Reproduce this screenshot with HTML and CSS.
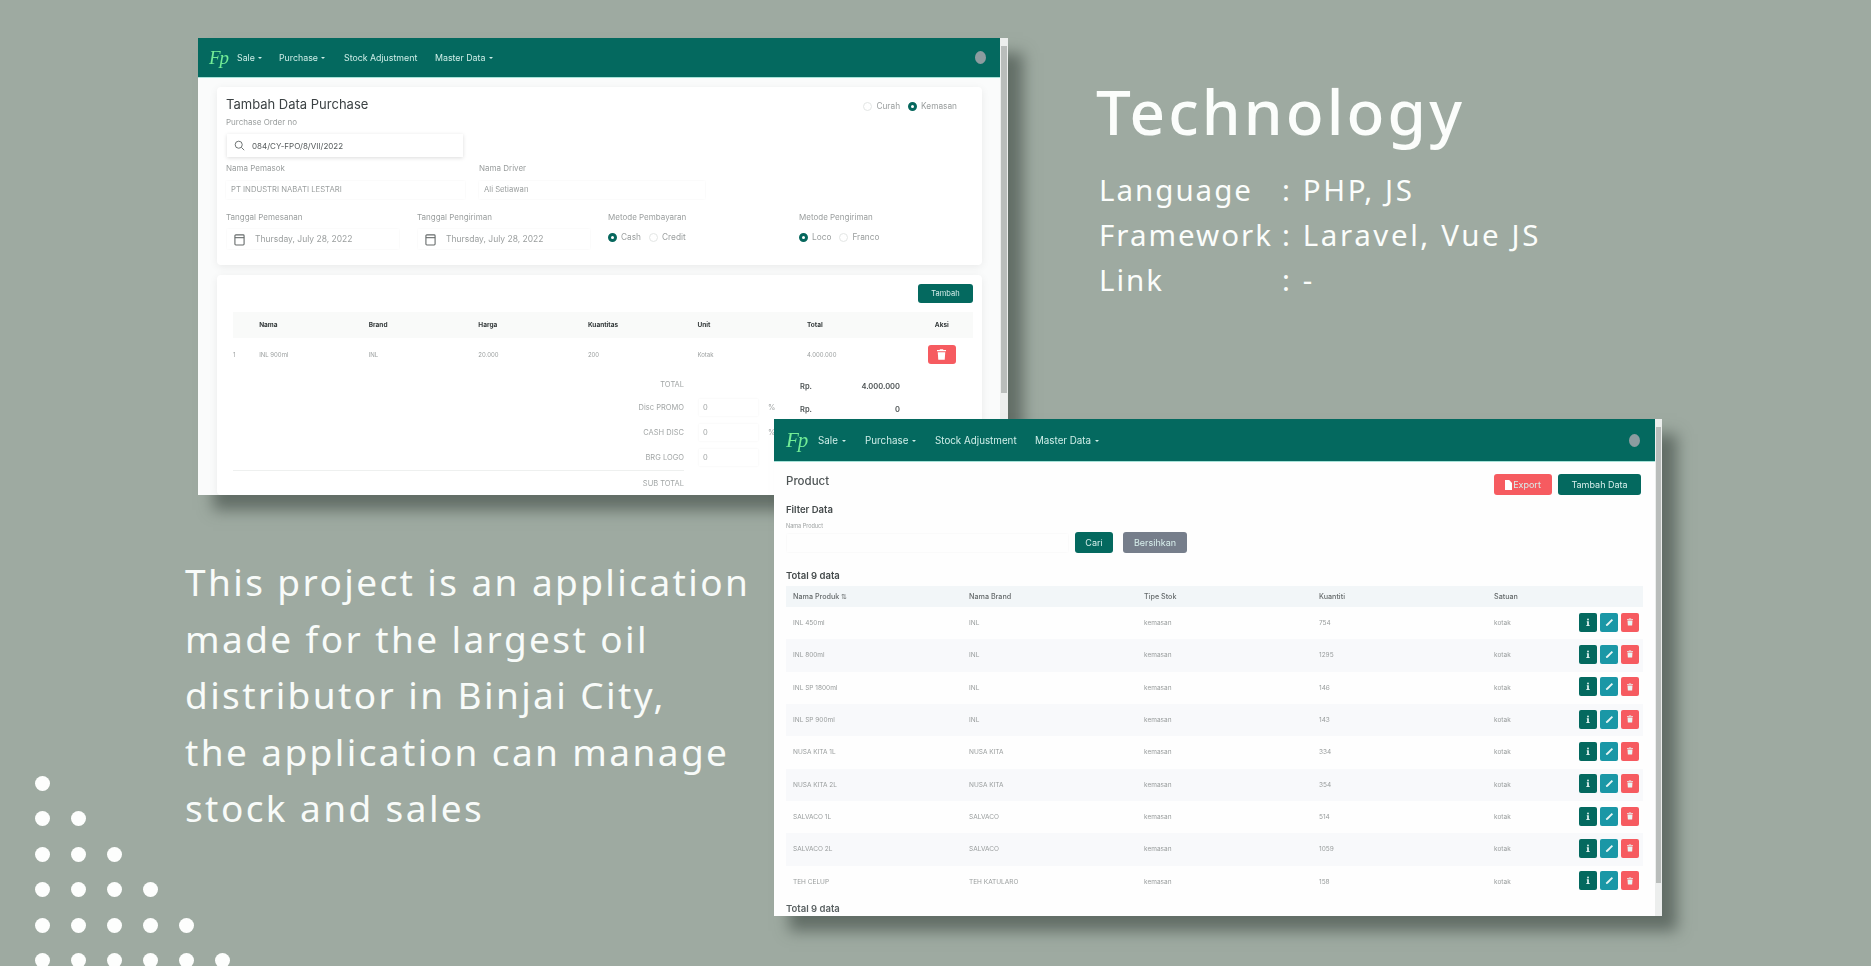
FILE: index.html
```html
<!DOCTYPE html>
<html lang="en">
<head>
  <meta charset="UTF-8">
  <title>Project - Technology</title>
  <link rel="stylesheet" href="styles.css">
</head>
<body>
  <svg class="icon-defs" width="0" height="0">
    <symbol id="i-info" viewBox="0 0 10 14"><circle cx="5" cy="2" r="1.5"/><path d="M3 5h3.4v6.4H8V13H2v-1.6h1.6V6.6H3z"/></symbol>
    <symbol id="i-pen" viewBox="0 0 14 14"><path d="M10.500 1.500l2 2-8.400 8.400L1.500 12.500l.6-2.600z"/></symbol>
    <symbol id="i-trash" viewBox="0 0 12 14"><path d="M4 0h4l.6 1H12v1.6H0V1h3.4zM1 4h10l-.7 10H1.700z"/></symbol>
    <symbol id="i-file" viewBox="0 0 10 14"><path d="M0 0h6l4 4v10H0z"/></symbol>
  </svg>

  <!-- jendela form purchase -->
  <section class="window window-form">
    <div class="screen">
      <nav class="nav">
        <span class="logo">Fp</span>
        <a class="nav-link nav-sale">Sale <i class="caret"></i></a>
        <a class="nav-link nav-purchase">Purchase <i class="caret"></i></a>
        <a class="nav-link nav-stock">Stock Adjustment</a>
        <a class="nav-link">Master Data <i class="caret"></i></a>
        <span class="avatar"></span>
      </nav>

      <div class="card card-form">
        <div class="form-head">
          <h2>Tambah Data Purchase</h2>
          <div class="radios">
            <span class="radio"></span><span>Curah</span>
            <span class="radio checked"></span><span>Kemasan</span>
          </div>
        </div>
        <label class="field-label">Purchase Order no</label>
        <div class="search-input">
          <svg viewBox="0 0 14 14" width="11" height="11" class="line-icon"><circle cx="6" cy="6" r="4.500"/><path d="M9.500 9.500L13 13"/></svg>
          <span>084/CY-FPO/8/VII/2022</span>
        </div>
        <div class="row-supplier">
          <div>
            <label class="field-label">Nama Pemasok</label>
            <div class="text-input">PT INDUSTRI NABATI LESTARI</div>
          </div>
          <div>
            <label class="field-label">Nama Driver</label>
            <div class="text-input">Ali Setiawan</div>
          </div>
        </div>
        <div class="row-dates">
          <div>
            <label class="field-label">Tanggal Pemesanan</label>
            <div class="date-input">
              <svg viewBox="0 0 12 14" width="11" height="13" class="line-icon"><rect x="1" y="2" width="10" height="11" rx="1"/><path d="M1 5h10"/></svg>
              <span>Thursday, July 28, 2022</span>
            </div>
          </div>
          <div>
            <label class="field-label">Tanggal Pengiriman</label>
            <div class="date-input">
              <svg viewBox="0 0 12 14" width="11" height="13" class="line-icon"><rect x="1" y="2" width="10" height="11" rx="1"/><path d="M1 5h10"/></svg>
              <span>Thursday, July 28, 2022</span>
            </div>
          </div>
          <div>
            <label class="field-label">Metode Pembayaran</label>
            <div class="radios radios-row">
              <span class="radio checked"></span><span>Cash</span>
              <span class="radio"></span><span>Credit</span>
            </div>
          </div>
          <div>
            <label class="field-label">Metode Pengiriman</label>
            <div class="radios radios-row">
              <span class="radio checked"></span><span>Loco</span>
              <span class="radio"></span><span>Franco</span>
            </div>
          </div>
        </div>
      </div>

      <div class="card card-items">
        <div class="items-top"><button class="btn btn-teal btn-add">Tambah</button></div>
        <table class="items-table">
          <thead>
            <tr><th></th><th>Nama</th><th>Brand</th><th>Harga</th><th>Kuantitas</th><th>Unit</th><th>Total</th><th class="col-aksi">Aksi</th></tr>
          </thead>
          <tbody>
            <tr>
              <td>1</td><td>INL 900ml</td><td>INL</td><td>20.000</td><td>200</td><td>Kotak</td><td>4.000.000</td>
              <td class="col-aksi"><button class="btn-del"><svg width="9" height="11"><use href="#i-trash"/></svg></button></td>
            </tr>
          </tbody>
        </table>
        <div class="totals">
          <span class="t-label">TOTAL</span><span></span><span></span><span class="t-rp">Rp.</span><span class="t-value">4.000.000</span>
          <span class="t-label">Disc PROMO</span><span class="t-field"><i>0</i></span><span class="t-pct">%</span><span class="t-rp">Rp.</span><span class="t-value">0</span>
          <span class="t-label">CASH DISC</span><span class="t-field"><i>0</i></span><span class="t-pct">%</span><span></span><span></span>
          <span class="t-label">BRG LOGO</span><span class="t-field"><i>0</i></span><span></span><span></span><span></span>
          <span class="t-label t-sub">SUB TOTAL</span><span></span><span></span><span></span><span></span>
        </div>
      </div>
    </div>
    <div class="scrollbar scrollbar-form"><span></span></div>
  </section>

  <!-- jendela list product -->
  <section class="window window-list">
    <div class="screen">
      <nav class="nav nav-large">
        <span class="logo">Fp</span>
        <a class="nav-link nav-sale">Sale <i class="caret"></i></a>
        <a class="nav-link nav-purchase">Purchase <i class="caret"></i></a>
        <a class="nav-link nav-stock">Stock Adjustment</a>
        <a class="nav-link">Master Data <i class="caret"></i></a>
        <span class="avatar"></span>
      </nav>

      <div class="list-body">
        <div class="list-head">
          <h2>Product</h2>
          <div class="list-actions">
            <button class="btn btn-red"><svg width="7" height="10"><use href="#i-file"/></svg>Export</button>
            <button class="btn btn-teal btn-data">Tambah Data</button>
          </div>
        </div>
        <h3 class="filter-title">Filter Data</h3>
        <label class="filter-label">Nama Product</label>
        <div class="filter-row">
          <div class="filter-input"></div>
          <button class="btn btn-teal btn-cari">Cari</button>
          <button class="btn btn-grey">Bersihkan</button>
        </div>
        <h3 class="total-title">Total 9 data</h3>
        <table class="product-table">
          <thead>
            <tr><th>Nama Produk ⇅</th><th>Nama Brand</th><th>Tipe Stok</th><th>Kuantiti</th><th>Satuan</th><th></th></tr>
          </thead>
          <tbody>
            <tr><td>INL 450ml</td><td>INL</td><td>kemasan</td><td>754</td><td>kotak</td><td><div class="actions"><button class="act act-info"><svg width="6" height="9"><use href="#i-info"/></svg></button><button class="act act-edit"><svg width="9" height="9"><use href="#i-pen"/></svg></button><button class="act act-del"><svg width="6" height="8"><use href="#i-trash"/></svg></button></div></td></tr>
            <tr><td>INL 800ml</td><td>INL</td><td>kemasan</td><td>1295</td><td>kotak</td><td><div class="actions"><button class="act act-info"><svg width="6" height="9"><use href="#i-info"/></svg></button><button class="act act-edit"><svg width="9" height="9"><use href="#i-pen"/></svg></button><button class="act act-del"><svg width="6" height="8"><use href="#i-trash"/></svg></button></div></td></tr>
            <tr><td>INL SP 1800ml</td><td>INL</td><td>kemasan</td><td>146</td><td>kotak</td><td><div class="actions"><button class="act act-info"><svg width="6" height="9"><use href="#i-info"/></svg></button><button class="act act-edit"><svg width="9" height="9"><use href="#i-pen"/></svg></button><button class="act act-del"><svg width="6" height="8"><use href="#i-trash"/></svg></button></div></td></tr>
            <tr><td>INL SP 900ml</td><td>INL</td><td>kemasan</td><td>143</td><td>kotak</td><td><div class="actions"><button class="act act-info"><svg width="6" height="9"><use href="#i-info"/></svg></button><button class="act act-edit"><svg width="9" height="9"><use href="#i-pen"/></svg></button><button class="act act-del"><svg width="6" height="8"><use href="#i-trash"/></svg></button></div></td></tr>
            <tr><td>NUSA KITA 1L</td><td>NUSA KITA</td><td>kemasan</td><td>334</td><td>kotak</td><td><div class="actions"><button class="act act-info"><svg width="6" height="9"><use href="#i-info"/></svg></button><button class="act act-edit"><svg width="9" height="9"><use href="#i-pen"/></svg></button><button class="act act-del"><svg width="6" height="8"><use href="#i-trash"/></svg></button></div></td></tr>
            <tr><td>NUSA KITA 2L</td><td>NUSA KITA</td><td>kemasan</td><td>354</td><td>kotak</td><td><div class="actions"><button class="act act-info"><svg width="6" height="9"><use href="#i-info"/></svg></button><button class="act act-edit"><svg width="9" height="9"><use href="#i-pen"/></svg></button><button class="act act-del"><svg width="6" height="8"><use href="#i-trash"/></svg></button></div></td></tr>
            <tr><td>SALVACO 1L</td><td>SALVACO</td><td>kemasan</td><td>514</td><td>kotak</td><td><div class="actions"><button class="act act-info"><svg width="6" height="9"><use href="#i-info"/></svg></button><button class="act act-edit"><svg width="9" height="9"><use href="#i-pen"/></svg></button><button class="act act-del"><svg width="6" height="8"><use href="#i-trash"/></svg></button></div></td></tr>
            <tr><td>SALVACO 2L</td><td>SALVACO</td><td>kemasan</td><td>1059</td><td>kotak</td><td><div class="actions"><button class="act act-info"><svg width="6" height="9"><use href="#i-info"/></svg></button><button class="act act-edit"><svg width="9" height="9"><use href="#i-pen"/></svg></button><button class="act act-del"><svg width="6" height="8"><use href="#i-trash"/></svg></button></div></td></tr>
            <tr><td>TEH CELUP</td><td>TEH KATULARO</td><td>kemasan</td><td>158</td><td>kotak</td><td><div class="actions"><button class="act act-info"><svg width="6" height="9"><use href="#i-info"/></svg></button><button class="act act-edit"><svg width="9" height="9"><use href="#i-pen"/></svg></button><button class="act act-del"><svg width="6" height="8"><use href="#i-trash"/></svg></button></div></td></tr>
          </tbody>
        </table>
        <h3 class="total-bottom">Total 9 data</h3>
      </div>
    </div>
    <div class="scrollbar scrollbar-list"><span></span></div>
  </section>

  <div class="tech">
    <h1>Technology</h1>
    <dl>
      <dt>Language</dt><dd>: PHP, JS</dd>
      <dt>Framework</dt><dd>: Laravel, Vue JS</dd>
      <dt>Link</dt><dd>: -</dd>
    </dl>
  </div>

  <p class="about">This project is an application<br>made for the largest oil<br>distributor in Binjai City,<br>the application can manage<br>stock and sales</p>

  <div class="dots">
    <div><i></i></div>
    <div><i></i><i></i></div>
    <div><i></i><i></i><i></i></div>
    <div><i></i><i></i><i></i><i></i></div>
    <div><i></i><i></i><i></i><i></i><i></i></div>
    <div><i></i><i></i><i></i><i></i><i></i><i></i></div>
  </div>
</body>
</html>
```

FILE: styles.css
```css
html, body {
  margin: 0;
  height: 100%;
}
body {
  position: relative;
  width: 1871px;
  height: 966px;
  overflow: hidden;
  background: #9eaaa1;
  font-family: "Inter", "Liberation Sans", sans-serif;
}
.icon-defs {
  position: absolute;
}
h1, h2, h3, p, dl, dd {
  margin: 0;
}
button {
  font-family: inherit;
  border: none;
  padding: 0;
}

/* jendela screenshot */
.window {
  position: absolute;
  display: flex;
  overflow: visible;
  background: #fefefe;
  box-shadow: 15px 15px 14px rgba(62, 72, 66, 0.62);
  filter: blur(0.7px);
}
.window-form {
  left: 198px;
  top: 38px;
  width: 810px;
  height: 457px;
  background: #fafbfb;
}
.window-list {
  left: 774px;
  top: 419px;
  width: 888px;
  height: 497px;
}
.screen {
  flex: 1;
  min-width: 0;
  overflow: hidden;
}
.scrollbar {
  flex: none;
  background: #eceeed;
}
.scrollbar span {
  display: block;
  margin: 8px 1px 0;
  background: #b9bdbb;
}
.scrollbar-form {
  width: 8px;
}
.scrollbar-form span {
  height: 347px;
}
.scrollbar-list {
  width: 7px;
}
.scrollbar-list span {
  height: 456px;
}

/* navbar */
.nav {
  display: flex;
  align-items: center;
  height: 39px;
  padding: 0 14px 0 11px;
  background: #04695f;
  border-bottom: 1px solid #a6e2d8;
  color: #cfeee8;
  font-size: 8.800px;
}
.logo {
  width: 28px;
  color: #72ec96;
  font-family: "Liberation Serif", serif;
  font-style: italic;
  font-size: 19px;
  letter-spacing: -1px;
}
.nav-link {
  white-space: nowrap;
}
.nav-sale {
  width: 42px;
}
.nav-purchase {
  width: 65px;
}
.nav-stock {
  width: 91px;
}
.caret {
  display: inline-block;
  margin-left: 1px;
  vertical-align: 2px;
  border-left: 2px solid transparent;
  border-right: 2px solid transparent;
  border-top: 2.500px solid #cfeee8;
}
.avatar {
  width: 11px;
  height: 13px;
  margin-left: auto;
  border-radius: 50%;
  background: #8d9ca0;
}
.nav-large {
  height: 42px;
  padding: 0 15px 0 12px;
  font-size: 9.800px;
}
.nav-large .logo {
  width: 32px;
  font-size: 21px;
}
.nav-large .nav-sale {
  width: 47px;
}
.nav-large .nav-purchase {
  width: 70px;
}
.nav-large .nav-stock {
  width: 100px;
}

/* form purchase */
.card {
  background: #fff;
  box-shadow: 0 2px 8px rgba(0, 0, 0, 0.07);
  border-radius: 4px;
}
.card-form {
  height: 178px;
  margin: 9px 18px 0 19px;
  padding: 9px 9px 0;
  box-sizing: border-box;
  color: #8f9393;
}
.form-head {
  display: flex;
  justify-content: space-between;
}
.form-head h2 {
  font-size: 13px;
  line-height: 16px;
  font-weight: 400;
  color: #3c4244;
}
.form-head .radios {
  margin: 4px 12px 0 0;
}
.radios {
  display: flex;
  align-items: center;
  gap: 4px;
  font-size: 8.300px;
  color: #9a9e9e;
}
.radios .radio + span {
  margin-right: 4px;
}
.radio {
  width: 9px;
  height: 9px;
  box-sizing: border-box;
  border: 1px solid #e3e6e5;
  border-radius: 50%;
}
.radio.checked {
  background: #fff;
  border: 3px solid #06675d;
}
.radios-row {
  margin-top: 9px;
}
.field-label {
  display: block;
  margin-top: 4px;
  font-size: 8px;
  line-height: 12px;
  color: #9a9e9e;
}
.search-input {
  display: flex;
  align-items: center;
  gap: 7px;
  width: 236px;
  height: 23px;
  margin: 6px 0 0 1px;
  padding-left: 7px;
  box-sizing: border-box;
  background: #fff;
  box-shadow: 0 1px 4px rgba(0, 0, 0, 0.14);
  font-size: 8px;
  color: #565b5c;
}
.line-icon {
  flex: none;
  fill: none;
  stroke: #666b6b;
  stroke-width: 1.200;
}
.row-supplier {
  display: grid;
  grid-template-columns: 253px 240px;
  margin-top: 1px;
}
.text-input {
  height: 18px;
  margin: 7px 14px 0 0;
  padding-left: 5px;
  box-shadow: 0 0 2px rgba(0, 0, 0, 0.05);
  font-size: 7.700px;
  line-height: 18px;
  color: #9a9e9e;
}
.row-dates {
  display: grid;
  grid-template-columns: repeat(4, 191px);
  margin-top: 8px;
}
.date-input {
  display: flex;
  align-items: center;
  gap: 10px;
  width: 172px;
  height: 20px;
  margin: 6px 0 0 1px;
  padding-left: 7px;
  box-sizing: border-box;
  box-shadow: 0 0 2px rgba(0, 0, 0, 0.05);
  font-size: 8.500px;
  color: #9a9e9e;
}

/* tabel item purchase */
.card-items {
  margin: 10px 18px 0 19px;
  padding: 9px 9px 0 16px;
}
.items-top {
  display: flex;
  justify-content: flex-end;
  height: 19px;
}
.btn {
  border-radius: 3px;
  color: #d8efec;
  font-size: 9px;
}
.btn-teal {
  background: #04695f;
}
.btn-add {
  width: 55px;
  font-size: 7.500px;
}
.items-table {
  width: 740px;
  margin-top: 9px;
  border-collapse: collapse;
  table-layout: fixed;
  font-size: 6px;
  color: #9b9f9f;
}
.items-table th {
  width: 109px;
  height: 26px;
  padding: 0;
  background: #f9faf9;
  color: #33393a;
  font-weight: 700;
  font-size: 6.500px;
  text-align: left;
}
.items-table th:first-child {
  width: 26px;
}
.items-table td {
  height: 32px;
  padding: 0;
}
.items-table .col-aksi {
  width: 56px;
  padding-right: 6px;
  text-align: center;
  box-sizing: border-box;
}
.btn-del {
  display: inline-flex;
  align-items: center;
  justify-content: center;
  width: 28px;
  height: 19px;
  border-radius: 3px;
  background: #f65b60;
  fill: #fff;
}
.totals {
  display: grid;
  grid-template-columns: 451px 74px 42px 30px 70px;
  grid-template-rows: 21px repeat(4, 25px);
  align-items: center;
  margin-top: 4px;
  font-size: 7.500px;
  color: #a2a6a6;
}
.t-label {
  text-align: right;
}
.t-rp, .t-value {
  padding-top: 4px;
  color: #4c5253;
  font-weight: 600;
}
.t-value {
  text-align: right;
}
.t-field {
  height: 17px;
  margin-left: 15px;
  box-shadow: 0 0 2px rgba(0, 0, 0, 0.06);
  line-height: 17px;
}
.t-field i {
  margin-left: 4px;
  font-style: normal;
}
.t-pct {
  padding-left: 10px;
}
.t-sub {
  height: 100%;
  line-height: 25px;
  padding-left: 350px;
  border-top: 1px solid #eef0ef;
  box-sizing: border-box;
}

/* list product */
.list-body {
  padding: 12px 12px 0;
}
.list-head {
  display: flex;
  justify-content: space-between;
}
.list-head h2 {
  font-size: 11.500px;
  line-height: 14px;
  font-weight: 500;
  color: #4e5455;
}
.list-actions {
  display: flex;
  gap: 6px;
  margin-right: 2px;
}
.list-actions .btn {
  height: 21px;
}
.btn-red {
  display: flex;
  align-items: center;
  justify-content: center;
  gap: 1px;
  width: 58px;
  background: #f65b60;
  fill: #fff;
}
.btn-data {
  width: 83px;
}
h3 {
  font-size: 9.500px;
  line-height: 12px;
  font-weight: 600;
  color: #444a4b;
}
.filter-title {
  margin-top: 9px;
}
.filter-label {
  display: block;
  margin-top: 6px;
  font-size: 5.500px;
  line-height: 8px;
  color: #9a9e9e;
}
.filter-row {
  display: flex;
  align-items: center;
  height: 21px;
  margin-top: 2px;
}
.filter-input {
  width: 281px;
  height: 18px;
  margin: 0 7px 0 1px;
  box-shadow: 0 0 2px rgba(0, 0, 0, 0.05);
}
.filter-row .btn {
  height: 21px;
}
.btn-cari {
  width: 38px;
  margin-right: 10px;
}
.btn-grey {
  width: 64px;
  background: #767e8b;
}
.total-title {
  margin-top: 17px;
}
.product-table {
  width: 857px;
  margin-top: 4px;
  border-collapse: collapse;
  table-layout: fixed;
  font-size: 6.500px;
  color: #989c9c;
}
.product-table th {
  width: 175px;
  height: 21px;
  padding: 0;
  background: #f2f6f8;
  color: #666b6c;
  font-weight: 500;
  font-size: 7.200px;
  text-align: left;
}
.product-table td {
  height: 32.330px;
  padding: 0;
}
.product-table th:first-child,
.product-table td:first-child {
  width: 176px;
  padding-left: 7px;
}
.product-table th:nth-child(5) {
  width: 85px;
}
.product-table th:last-child {
  width: 64px;
}
.product-table tbody tr:nth-child(even) {
  background: #f8f9fb;
}
.actions {
  display: flex;
  gap: 3px;
  margin-top: -2px;
}
.act {
  display: flex;
  align-items: center;
  justify-content: center;
  width: 18px;
  height: 19px;
  border-radius: 2px;
  fill: #e8f5f3;
}
.act-info {
  background: #04695f;
}
.act-edit {
  background: #1a97a6;
}
.act-del {
  background: #f65b60;
}
.total-bottom {
  margin-top: 5px;
  color: #5a6162;
}

/* teks slide */
.tech {
  position: absolute;
  left: 1096px;
  top: 69px;
  color: #fbfdfb;
}
.tech h1 {
  font-family: "Noto Sans", sans-serif;
  font-weight: 500;
  font-size: 62px;
  line-height: 84px;
  letter-spacing: 3.100px;
}
.tech dl {
  display: grid;
  grid-template-columns: 183px auto;
  margin: 14px 0 0 3px;
  font-family: "Noto Sans", sans-serif;
  font-size: 29.500px;
  line-height: 45px;
  letter-spacing: 2px;
}
.tech dd {
  letter-spacing: 2.600px;
}
.about {
  position: absolute;
  left: 185px;
  top: 554px;
  font-family: "Noto Sans", sans-serif;
  font-size: 37px;
  line-height: 56.500px;
  letter-spacing: 2.400px;
  color: #f8fbf9;
  white-space: nowrap;
}
.dots {
  position: absolute;
  left: 34.500px;
  top: 775.500px;
}
.dots div {
  display: flex;
  gap: 21px;
  margin-bottom: 20.500px;
}
.dots i {
  width: 15px;
  height: 15px;
  border-radius: 50%;
  background: #fdfefd;
}
```
